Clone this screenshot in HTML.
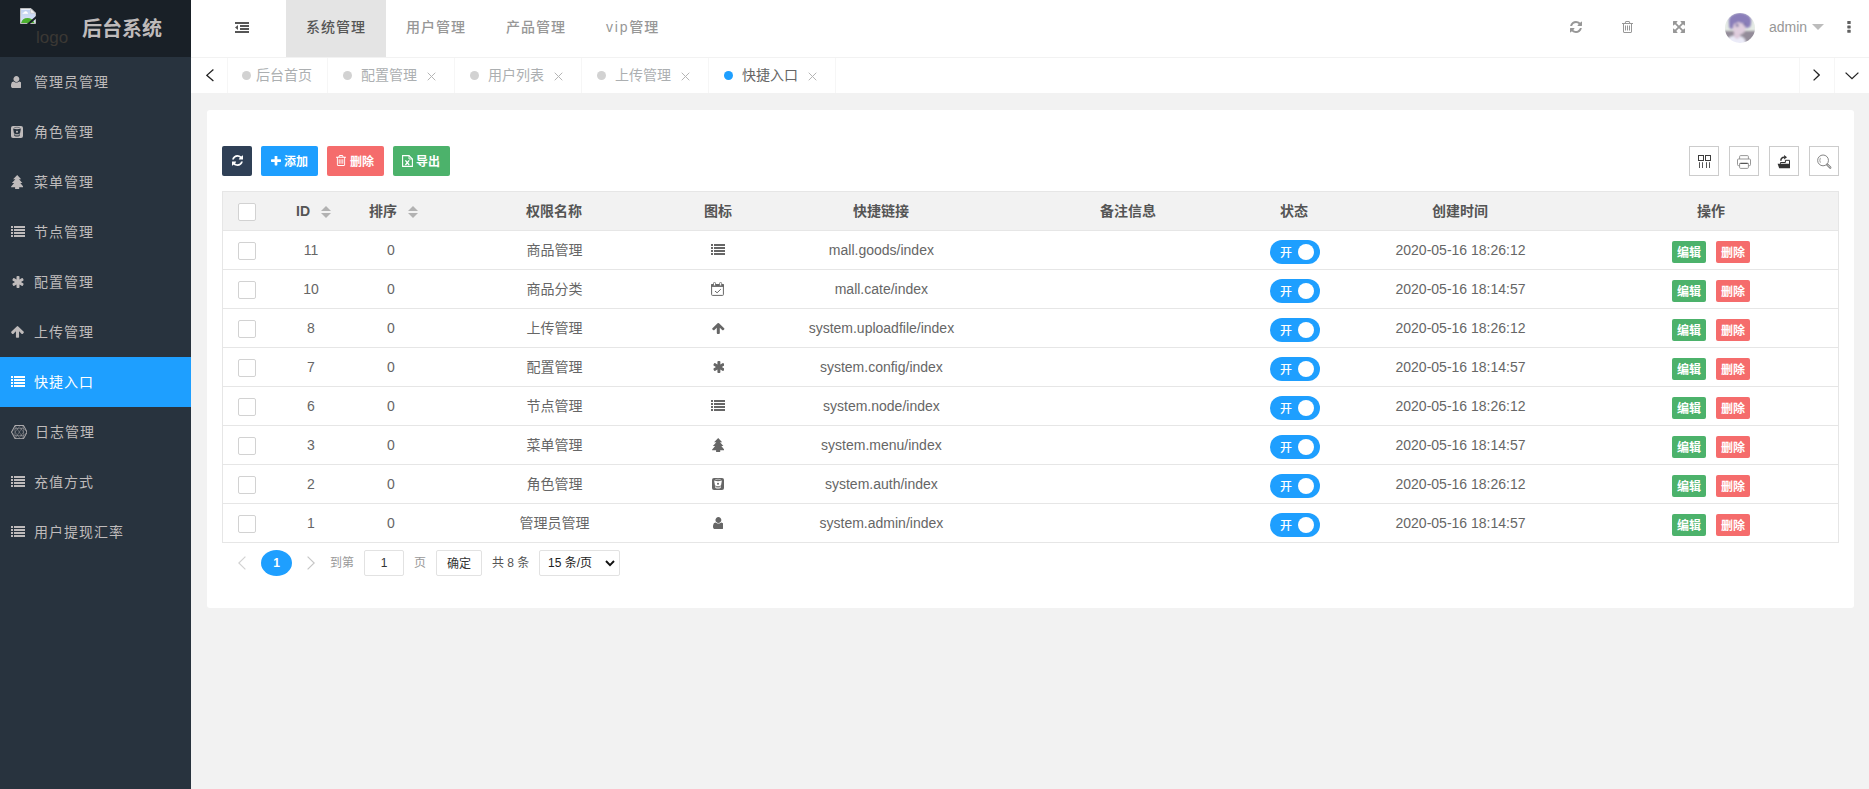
<!DOCTYPE html>
<html lang="zh-CN">
<head>
<meta charset="utf-8">
<title>后台系统</title>
<style>
*{box-sizing:border-box;margin:0;padding:0}
html,body{width:1869px;height:789px;overflow:hidden;background:#f2f2f2}
body{position:relative;font-family:"Liberation Sans","Noto Sans CJK SC",sans-serif;font-size:14px;color:#666;line-height:1}
.abs{position:absolute}
svg{display:block}
/* logo */
.logo{position:absolute;left:0;top:0;width:191px;height:57px;background:#192027}
.logo .alt{position:absolute;left:36px;top:28px;font-size:17px;color:#3b3834;line-height:20px}
.logo h1{position:absolute;left:82px;top:14px;font-size:20px;line-height:30px;font-weight:bold;color:#bfbbbb;white-space:nowrap}
/* side */
.side{position:absolute;left:0;top:57px;width:191px;height:732px;background:#28333e}
.side .it{position:absolute;left:0;width:191px;height:50px;color:#bfbbbb;font-size:14px;letter-spacing:1px;line-height:50px;padding-left:34px;white-space:nowrap}
.side .it.on{background:#1e9fff;color:#fff}
.side .it svg{position:absolute;fill:currentColor}
/* header */
.header{position:absolute;left:191px;top:0;width:1678px;height:58px;background:#fff;border-bottom:1px solid #f2f2f2;z-index:2}
.nav{position:absolute;top:0;height:57px;line-height:54px;font-size:14px;font-weight:500;letter-spacing:1px;color:#979797;white-space:nowrap}
.nav.on{background:#e4e4e4;color:#565656;width:100px;text-align:center}
/* tabs */
.tabs{position:absolute;left:191px;top:57px;width:1678px;height:36px;background:#fff}
.tabs .sep{position:absolute;top:0;width:1px;height:36px;background:#f6f6f6}
.tabs .t{position:absolute;top:0;height:36px;line-height:36px;font-size:14px;color:#acafb1;white-space:nowrap}
.tabs .t.on{color:#666}
.tabs .dot{position:absolute;top:14px;width:9px;height:9px;border-radius:50%;background:#d2d2d2}
.tabs .dot.on{background:#1e9fff}
/* card */
.card{position:absolute;left:207px;top:110px;width:1647px;height:498px;background:#fff;border-radius:3px}
.btn{position:absolute;top:146px;height:30px;border-radius:2px;color:#fff;font-size:12px;font-weight:700;line-height:32px;white-space:nowrap;overflow:hidden}
.tool{position:absolute;top:146px;width:30px;height:30px;border:1px solid #ccc;background:#fff}
/* table */
.tbl{position:absolute;left:222px;top:191px;width:1617px;height:352px;border:1px solid #e6e6e6;background:#fff}
.thead{position:absolute;left:0;top:0;width:1615px;height:39px;background:#f2f2f2;border-bottom:1px solid #e6e6e6}
.row{position:absolute;left:0;width:1615px;height:39px;border-bottom:1px solid #e6e6e6}
.c{position:absolute;top:0;height:38px;line-height:38px;text-align:center;white-space:nowrap;transform:translateX(-50%)}
.thead .c{font-weight:bold;color:#555}
.cb{position:absolute;left:15px;width:18px;height:18px;border:1px solid #d2d2d2;border-radius:2px;background:#fff}
.sw{position:absolute;left:1047px;top:9px;width:50px;height:24px;border-radius:12px;background:#1e9fff;color:#fff;font-size:12px;font-weight:500;line-height:26px;padding-left:10px;overflow:hidden}
.sw i{position:absolute;left:28px;top:4px;width:16px;height:16px;border-radius:50%;background:#fff}
.xs{position:absolute;top:10px;width:34px;height:22px;border-radius:2px;color:#fff;font-size:12px;font-weight:700;line-height:24px;overflow:hidden;text-align:center}
.ico{position:absolute}
/* page */
.pg{position:absolute;font-size:12px;line-height:26px;white-space:nowrap}
</style>
</head>
<body>
<div class="logo"><svg class="ico" style="left:20px;top:8px" width="16" height="16" viewBox="0 0 16 16"><defs><linearGradient id="sky" x1="0" y1="0" x2="0" y2="1"><stop offset="0" stop-color="#bfd0f0"/><stop offset="1" stop-color="#dbe6f9"/></linearGradient></defs><path d="M0.5 0.5 H11 L15.5 5 V15.5 H0.5Z" fill="url(#sky)" stroke="#bdbdbd" stroke-width="1"/><path d="M1.2 1.2 H10.6 V2 H1.2Z" fill="#f2f5fc"/><path d="M2.4 5.7 Q2.6 4.6 4 4.6 Q4.6 3.1 6 3.3 Q7.2 3.4 7.4 4.6 Q8.2 4.7 8.1 5.7Z" fill="#fff"/><path d="M1 15 Q2.5 9.8 7.6 9.9 Q12.4 10 14.6 15Z" fill="#4cb030"/><path d="M10.6 0.8 L15.2 5.2 H10.6Z" fill="#f4f4f4" stroke="#c4c4c4" stroke-width="0.7"/><path d="M16.2 7.7 V10.5 L9.6 16.2 H6.6Z" fill="#192027"/></svg><span class="alt">logo</span><h1>后台系统</h1></div>
<div class="side">
<div class="it" style="top:0px"><svg class="ico" style="left:10.5px;top:19px" width="10.8" height="12" viewBox="192 128 1408 1536" preserveAspectRatio="none"><path d="M1600 1405q0 120-73 189.500t-194 69.500h-874q-121 0-194-69.500t-73-189.500q0-53 3.500-103.500t14-109 26.500-108.500 43-97.500 62-81 85.500-53.500 111.500-20q9 0 42 21.500t74.500 48 108 48 133.500 21.500 133.500-21.500 108-48 74.500-48 42-21.500q61 0 111.500 20t85.500 53.500 62 81 43 97.500 26.500 108.500 14 109 3.500 103.500zm-320-893q0 159-112.500 271.500t-271.500 112.500-271.500-112.500-112.500-271.500 112.500-271.500 271.500-112.500 271.500 112.500 112.500 271.500z"/></svg>管理员管理</div>
<div class="it" style="top:50px"><svg class="ico" style="left:11px;top:19px" width="12" height="12" viewBox="0 0 12 12"><rect x="0" y="0" width="12" height="12" rx="2"/><path d="M3.2 1.7 Q6 0.8 8.8 1.7" fill="none" stroke="#28333e" stroke-width="0.5"/><path d="M2.1 2.5 Q6 4.1 9.9 2.5 L9.0 7.4 Q6 8.5 3.0 7.4 Z" fill="#28333e"/><circle cx="6" cy="5.7" r="1.0"/><path d="M3.1 8.3 Q6 9.3 8.9 8.3 L8.6 10 Q6 11 3.4 10 Z" fill="#28333e"/><path d="M3.9 9.0 Q6 9.8 8.1 9.0" fill="none" stroke="currentColor" stroke-width="0.55"/></svg>角色管理</div>
<div class="it" style="top:100px"><svg class="ico" style="left:11px;top:17.5px" width="12.4" height="14.4" viewBox="0 0 12.4 14.4"><path d="M6.2 0 L10.2 4.25 H8.05 L11.4 8.05 H9.3 L12.4 11.7 Q12.4 12.3 11.8 12.3 H8.2 V14.4 H4.1 V12.3 H0.6 Q0 12.3 0 11.7 L3.1 8.05 H0.9 L4.35 4.25 H2.1 Z"/></svg>菜单管理</div>
<div class="it" style="top:150px"><svg class="ico" style="left:11px;top:19px" width="14" height="11" viewBox="0 0 14 11"><rect x="0" y="0" width="2" height="2"/><rect x="3" y="0" width="11" height="2"/><rect x="0" y="3" width="2" height="2"/><rect x="3" y="3" width="11" height="2"/><rect x="0" y="6" width="2" height="2"/><rect x="3" y="6" width="11" height="2"/><rect x="0" y="9" width="2" height="2"/><rect x="3" y="9" width="11" height="2"/></svg>节点管理</div>
<div class="it" style="top:200px"><svg class="ico" style="left:12px;top:19px" width="12" height="12" viewBox="128 128 1536 1536" preserveAspectRatio="none"><path d="M1546 1050q46 26 59.500 77.500t-12.500 97.500l-64 110q-26 46-77.500 59.500t-97.500-12.500l-266-153v307q0 52-38 90t-90 38h-128q-52 0-90-38t-38-90v-307l-266 153q-46 26-97.500 12.500t-77.500-59.500l-64-110q-26-46-12.500-97.500t59.500-77.500l266-154-266-154q-46-26-59.500-77.500t12.500-97.500l64-110q26-46 77.500-59.500t97.500 12.500l266 153v-307q0-52 38-90t90-38h128q52 0 90 38t38 90v307l266-153q46-26 97.500-12.500t77.500 59.500l64 110q26 46 12.500 97.500t-59.500 77.500l-266 154z"/></svg>配置管理</div>
<div class="it" style="top:250px"><svg class="ico" style="left:11px;top:19px" width="13" height="12" viewBox="96 180 1600 1500" preserveAspectRatio="none"><path d="M1675 971q0 51-37 90l-75 75q-38 38-91 38-54 0-90-38l-294-293v704q0 52-37.500 84.500t-90.500 32.500h-128q-53 0-90.500-32.500t-37.500-84.500v-704l-294 293q-36 38-90 38t-90-38l-75-75q-38-38-38-90 0-53 38-91l651-651q35-37 90-37 54 0 91 37l651 651q37 39 37 91z"/></svg>上传管理</div>
<div class="it on" style="top:300px"><svg class="ico" style="left:11px;top:19px" width="14" height="11" viewBox="0 0 14 11"><rect x="0" y="0" width="2" height="2"/><rect x="3" y="0" width="11" height="2"/><rect x="0" y="3" width="2" height="2"/><rect x="3" y="3" width="11" height="2"/><rect x="0" y="6" width="2" height="2"/><rect x="3" y="6" width="11" height="2"/><rect x="0" y="9" width="2" height="2"/><rect x="3" y="9" width="11" height="2"/></svg>快捷入口</div>
<div class="it" style="top:350px;padding-left:35px"><svg class="ico" style="left:10.8px;top:17.9px;fill:none" width="16.6" height="14.2" viewBox="0 0 16.6 14.2" stroke="#bfbbbb" stroke-width="0.9" fill="none"><path d="M4 0.5 H12.6 L16.1 7.1 L12.6 13.7 H4 L0.5 7.1 Z"/><g stroke-width="0.55" opacity="0.7"><path d="M4 0.5 V13.7 M12.6 0.5 V13.7 M4 0.5 L12.6 13.7 M12.6 0.5 L4 13.7 M4 7.1 L8.3 1.6 L12.6 7.1 L8.3 12.6 Z M0.5 7.1 L4 3.4 M0.5 7.1 L4 10.8 M16.1 7.1 L12.6 3.4 M16.1 7.1 L12.6 10.8 M4 3.6 H12.6 M4 10.6 H12.6"/></g></svg>日志管理</div>
<div class="it" style="top:400px"><svg class="ico" style="left:11px;top:19px" width="14" height="11" viewBox="0 0 14 11"><rect x="0" y="0" width="2" height="2"/><rect x="3" y="0" width="11" height="2"/><rect x="0" y="3" width="2" height="2"/><rect x="3" y="3" width="11" height="2"/><rect x="0" y="6" width="2" height="2"/><rect x="3" y="6" width="11" height="2"/><rect x="0" y="9" width="2" height="2"/><rect x="3" y="9" width="11" height="2"/></svg>充值方式</div>
<div class="it" style="top:450px"><svg class="ico" style="left:11px;top:19px" width="14" height="11" viewBox="0 0 14 11"><rect x="0" y="0" width="2" height="2"/><rect x="3" y="0" width="11" height="2"/><rect x="0" y="3" width="2" height="2"/><rect x="3" y="3" width="11" height="2"/><rect x="0" y="6" width="2" height="2"/><rect x="3" y="6" width="11" height="2"/><rect x="0" y="9" width="2" height="2"/><rect x="3" y="9" width="11" height="2"/></svg>用户提现汇率</div>
</div>
<div class="header">
<svg class="ico" style="left:44px;top:22px" width="14" height="11" viewBox="0 0 14 11" fill="#565656"><rect x="0" y="0" width="14" height="2"/><rect x="5" y="3" width="9" height="2"/><rect x="5" y="6" width="9" height="2"/><rect x="0" y="9" width="14" height="2"/><path d="M3 3 V8 L0 5.5Z"/></svg>
<div class="nav on" style="left:95px">系统管理</div>
<div class="nav" style="left:215px">用户管理</div>
<div class="nav" style="left:315px">产品管理</div>
<div class="nav" style="left:415px"><span style="letter-spacing:1.8px">vip</span>管理</div>
<svg class="ico" style="left:1379px;top:21px" width="12" height="12" viewBox="128 128 1536 1536" preserveAspectRatio="none" fill="#979797"><path d="M1639 1056q0 5-1 7-64 268-268 434.500t-478 166.500q-146 0-282.500-55t-243.500-157l-129 129q-19 19-45 19t-45-19-19-45v-448q0-26 19-45t45-19h448q26 0 45 19t19 45-19 45l-137 137q71 66 161 102t187 36q134 0 250-65t186-179q11-17 53-117 8-23 30-23h192q13 0 22.500 9.500t9.500 22.500zm25-800v448q0 26-19 45t-45 19h-448q-26 0-45-19t-19-45 19-45l138-138q-148-137-349-137-134 0-250 65t-186 179q-11 17-53 117-8 23-30 23h-199q-13 0-22.500-9.500t-9.500-22.500v-7q65-268 270-434.500t480-166.500q146 0 284 55.500t245 156.500l130-129q19-19 45-19t45 19 19 45z"/></svg>
<svg class="ico" style="left:1431px;top:21px" width="11" height="12" viewBox="192 128 1408 1536" preserveAspectRatio="none" fill="#979797"><path d="M704 736v576q0 14-9 23t-23 9h-64q-14 0-23-9t-9-23v-576q0-14 9-23t23-9h64q14 0 23 9t9 23zm256 0v576q0 14-9 23t-23 9h-64q-14 0-23-9t-9-23v-576q0-14 9-23t23-9h64q14 0 23 9t9 23zm256 0v576q0 14-9 23t-23 9h-64q-14 0-23-9t-9-23v-576q0-14 9-23t23-9h64q14 0 23 9t9 23zm128 724v-948h-896v948q0 22 7 40.500t14.500 27 10.500 8.500h832q3 0 10.500-8.500t14.500-27 7-40.500zm-672-1076h448l-48-117q-7-9-17-11h-317q-10 2-17 11zm928 32v64q0 14-9 23t-23 9h-96v948q0 83-47 143.500t-113 60.500h-832q-66 0-113-58.500t-47-141.500v-952h-96q-14 0-23-9t-9-23v-64q0-14 9-23t23-9h309l70-167q15-37 54-63t79-26h320q40 0 79 26t54 63l70 167h309q14 0 23 9t9 23z"/></svg>
<svg class="ico" style="left:1482px;top:21px" width="12" height="12" viewBox="128 128 1536 1536" preserveAspectRatio="none" fill="#979797"><path d="M1411 541l-355 355 355 355 144-144q29-31 70-14 39 17 39 59v448q0 26-19 45t-45 19h-448q-42 0-59-40-17-39 14-69l144-144-355-355-355 355 144 144q31 30 14 69-17 40-59 40h-448q-26 0-45-19t-19-45v-448q0-42 40-59 39-17 69 14l144 144 355-355-355-355-144 144q-19 19-45 19-12 0-24-5-40-17-40-59v-448q0-26 19-45t45-19h448q42 0 59 40 17 39-14 69l-144 144 355 355 355-355-144-144q-31-30-14-69 17-40 59-40h448q26 0 45 19t19 45v448q0 42-39 59-13 5-25 5-26 0-45-19z"/></svg>
<svg class="ico" style="left:1534px;top:13px" width="30" height="30" viewBox="0 0 30 30"><defs><clipPath id="av"><circle cx="15" cy="15" r="15"/></clipPath><filter id="bl" x="-20%" y="-20%" width="140%" height="140%"><feGaussianBlur stdDeviation="0.9"/></filter></defs><g clip-path="url(#av)" opacity="0.88"><rect width="30" height="30" fill="#e2e9e2"/><g filter="url(#bl)"><rect x="-3" y="18" width="36" height="15" fill="#857d8b"/><ellipse cx="11" cy="28.5" rx="9.5" ry="6" fill="#e9e9f7"/><ellipse cx="15" cy="8" rx="11.2" ry="8.6" fill="#7a6db0"/><ellipse cx="6.6" cy="11.5" rx="2.6" ry="4.6" fill="#7a6db0"/><ellipse cx="22.5" cy="10.5" rx="3.4" ry="4.2" fill="#7a6db0"/><ellipse cx="12" cy="21" rx="3.2" ry="5" fill="#d9c3d6"/><ellipse cx="14.2" cy="15" rx="6.2" ry="6.6" fill="#dcc8da"/><path d="M6 9.5 Q10 12 13.5 9 Q17 11.5 20 9.5 Q23 10.5 24 8 L22 2 H8Z" fill="#7a6db0"/><ellipse cx="12.2" cy="12.4" rx="1.5" ry="1.3" fill="#5a5390"/><ellipse cx="19.6" cy="11.4" rx="1.3" ry="1.2" fill="#5a5390"/></g></g></svg>
<div class="nav" style="left:1578px;letter-spacing:0">admin</div>
<div style="position:absolute;left:1621px;top:24px;width:0;height:0;border:6px solid transparent;border-top-color:#bcbcbc"></div>
<svg class="ico" style="left:1655.5px;top:21px" width="4" height="12" viewBox="0 0 4 12" fill="#606060"><rect x="0.3" y="0" width="3.4" height="3" rx="0.6"/><rect x="0.3" y="4.4" width="3.4" height="3" rx="0.6"/><rect x="0.3" y="8.8" width="3.4" height="3" rx="0.6"/></svg>
</div>
<div class="tabs">
<div class="sep" style="left:36px"></div>
<div class="sep" style="left:136px"></div>
<div class="sep" style="left:263px"></div>
<div class="sep" style="left:390px"></div>
<div class="sep" style="left:517px"></div>
<div class="sep" style="left:644px"></div>
<div class="sep" style="left:1608px"></div>
<div class="sep" style="left:1643px"></div>
<svg class="ico" style="left:15px;top:12px;fill:none" width="8" height="12.6" viewBox="0 0 8 12.6" fill="none" stroke="#222" stroke-width="1.3"><path d="M7.4 0.6 L0.8 6.3 L7.4 12.0"/></svg>
<svg class="ico" style="left:1622px;top:12px;fill:none" width="7" height="12" viewBox="0 0 7 12" fill="none" stroke="#222" stroke-width="1.3"><path d="M0.6 0.6 L6.2 6.0 L0.6 11.4"/></svg>
<svg class="ico" style="left:1654px;top:15px;fill:none" width="14" height="7.5" viewBox="0 0 14 7.5" fill="none" stroke="#222" stroke-width="1.3"><path d="M0.6 0.6 L7.0 6.7 L13.4 0.6"/></svg>
<div class="dot" style="left:51px"></div><div class="t" style="left:65px">后台首页</div>
<div class="dot" style="left:152px"></div><div class="t" style="left:170px">配置管理</div>
<svg class="ico" style="left:236.4px;top:15px;fill:none" width="9" height="9" viewBox="0 0 9 9" fill="none" stroke="#b5b5b5" stroke-width="1"><path d="M0.7 0.7 L8.3 8.3 M8.3 0.7 L0.7 8.3"/></svg>
<div class="dot" style="left:279px"></div><div class="t" style="left:297px">用户列表</div>
<svg class="ico" style="left:363.4px;top:15px;fill:none" width="9" height="9" viewBox="0 0 9 9" fill="none" stroke="#b5b5b5" stroke-width="1"><path d="M0.7 0.7 L8.3 8.3 M8.3 0.7 L0.7 8.3"/></svg>
<div class="dot" style="left:406px"></div><div class="t" style="left:424px">上传管理</div>
<svg class="ico" style="left:490.4px;top:15px;fill:none" width="9" height="9" viewBox="0 0 9 9" fill="none" stroke="#b5b5b5" stroke-width="1"><path d="M0.7 0.7 L8.3 8.3 M8.3 0.7 L0.7 8.3"/></svg>
<div class="dot on" style="left:533px"></div><div class="t on" style="left:551px">快捷入口</div>
<svg class="ico" style="left:617.4px;top:15px;fill:none" width="9" height="9" viewBox="0 0 9 9" fill="none" stroke="#b5b5b5" stroke-width="1"><path d="M0.7 0.7 L8.3 8.3 M8.3 0.7 L0.7 8.3"/></svg>
</div>
<div class="card"></div>
<div class="btn" style="left:222px;width:30px;background:#2f4056"><svg class="ico" style="left:10px;top:9px" width="11" height="11" viewBox="128 128 1536 1536" preserveAspectRatio="none" fill="#fff"><path d="M1639 1056q0 5-1 7-64 268-268 434.500t-478 166.500q-146 0-282.500-55t-243.500-157l-129 129q-19 19-45 19t-45-19-19-45v-448q0-26 19-45t45-19h448q26 0 45 19t19 45-19 45l-137 137q71 66 161 102t187 36q134 0 250-65t186-179q11-17 53-117 8-23 30-23h192q13 0 22.500 9.500t9.500 22.500zm25-800v448q0 26-19 45t-45 19h-448q-26 0-45-19t-19-45 19-45l138-138q-148-137-349-137-134 0-250 65t-186 179q-11 17-53 117-8 23-30 23h-199q-13 0-22.500-9.500t-9.500-22.500v-7q65-268 270-434.500t480-166.500q146 0 284 55.500t245 156.500l130-129q19-19 45-19t45 19 19 45z"/></svg></div>
<div class="btn" style="left:261px;width:57px;background:#1e9fff;padding-left:23px"><svg class="ico" style="left:10px;top:10px" width="10" height="10" viewBox="192 192 1408 1408" preserveAspectRatio="none" fill="#fff"><path d="M1600 736v192q0 40-28 68t-68 28h-416v416q0 40-28 68t-68 28h-192q-40 0-68-28t-28-68v-416h-416q-40 0-68-28t-28-68v-192q0-40 28-68t68-28h416v-416q0-40 28-68t68-28h192q40 0 68 28t28 68v416h416q40 0 68 28t28 68z"/></svg>添加</div>
<div class="btn" style="left:327px;width:57px;background:#f56c6c;padding-left:23px"><svg class="ico" style="left:9px;top:9px" width="10" height="11" viewBox="192 128 1408 1536" preserveAspectRatio="none" fill="#fff"><path d="M704 736v576q0 14-9 23t-23 9h-64q-14 0-23-9t-9-23v-576q0-14 9-23t23-9h64q14 0 23 9t9 23zm256 0v576q0 14-9 23t-23 9h-64q-14 0-23-9t-9-23v-576q0-14 9-23t23-9h64q14 0 23 9t9 23zm256 0v576q0 14-9 23t-23 9h-64q-14 0-23-9t-9-23v-576q0-14 9-23t23-9h64q14 0 23 9t9 23zm128 724v-948h-896v948q0 22 7 40.500t14.500 27 10.500 8.500h832q3 0 10.500-8.500t14.500-27 7-40.500zm-672-1076h448l-48-117q-7-9-17-11h-317q-10 2-17 11zm928 32v64q0 14-9 23t-23 9h-96v948q0 83-47 143.500t-113 60.500h-832q-66 0-113-58.500t-47-141.500v-952h-96q-14 0-23-9t-9-23v-64q0-14 9-23t23-9h309l70-167q15-37 54-63t79-26h320q40 0 79 26t54 63l70 167h309q14 0 23 9t9 23z"/></svg>删除</div>
<div class="btn" style="left:393px;width:57px;background:#4cb26b;padding-left:23px"><svg class="ico" style="left:9px;top:9px;fill:none" width="11" height="12" viewBox="0 0 11 12" fill="none" stroke="#fff"><path d="M0.6 0.6 H7 L10.4 4 V11.4 H0.6 Z" stroke-width="1.1"/><path d="M7 0.6 V4 H10.4" stroke-width="0.9"/><path d="M3.4 5.4 L7.2 10 M7.2 5.4 L3.4 10" stroke-width="1.3"/></svg>导出</div>
<div class="tool" style="left:1689px"><svg class="ico" style="left:0;top:0;fill:none" width="28" height="28" viewBox="0 0 28 28" fill="none" stroke="#3c3c3c" stroke-width="1"><rect x="8.5" y="8.5" width="5" height="5"/><rect x="15.5" y="8.5" width="5" height="5"/><path d="M9.5 15.2 V21 M12.5 15.2 V21 M16.5 15.2 V21 M19.5 15.2 V21" stroke="#555"/></svg></div>
<div class="tool" style="left:1729px"><svg class="ico" style="left:7px;top:8px;fill:none" width="14" height="14" viewBox="0 0 14 14" fill="none" stroke="#8c8c8c" stroke-width="0.9"><path d="M2.6 4 V1.6 Q2.6 0.6 3.6 0.6 H10.4 Q11.4 0.6 11.4 1.6 V4"/><path d="M2.6 10.6 H1.4 Q0.5 10.6 0.5 9.6 V5 Q0.5 4 1.4 4 H12.6 Q13.5 4 13.5 5 V9.6 Q13.5 10.6 12.6 10.6 H11.4"/><path d="M2.6 8.4 H11.4 V12.4 Q11.4 13.4 10.4 13.4 H3.6 Q2.6 13.4 2.6 12.4Z"/><path d="M3.4 8.4 H10.6" stroke="#555" stroke-width="1.2"/></svg></div>
<div class="tool" style="left:1769px"><svg class="ico" style="left:7px;top:8px" width="14" height="14" viewBox="0 0 14 14" fill="#333"><path d="M0.6 8.8 H12.3 L13 13.2 H2.2Z"/><path d="M3.5 8.8 V7.5 H8.4 V5.3 H12.5 V13" fill="none" stroke="#333" stroke-width="1"/><path d="M3.9 5.8 Q3.7 2.3 7.4 2.3" fill="none" stroke="#333" stroke-width="1.5"/><path d="M7.1 0 L10 2.3 L7.1 4.6Z"/></svg></div>
<div class="tool" style="left:1809px"><svg class="ico" style="left:6px;top:7px;fill:none" width="17" height="17" viewBox="0 0 17 17" fill="none" stroke="#777" stroke-width="0.9"><circle cx="7.05" cy="6.4" r="5.4"/><path d="M4.4 3.9 Q3.1 6.3 4.4 8.7" stroke-width="0.7"/><path d="M11.3 10.6 L14.3 13.6" stroke-width="2.2" stroke-linecap="round"/><path d="M11.5 10.8 L14.1 13.4" stroke="#fff" stroke-width="0.8" stroke-linecap="round"/></svg></div>
<div class="tbl">
<div class="thead"><div class="cb" style="top:11px"></div>
<div class="c" style="left:80px">ID</div>
<div class="c" style="left:160px">排序</div>
<div class="c" style="left:331px">权限名称</div>
<div class="c" style="left:495px">图标</div>
<div class="c" style="left:658px">快捷链接</div>
<div class="c" style="left:905px">备注信息</div>
<div class="c" style="left:1071px">状态</div>
<div class="c" style="left:1237px">创建时间</div>
<div class="c" style="left:1488px">操作</div>
<div style="position:absolute;left:98px;top:14px;width:0;height:0;border:5px solid transparent;border-top:0;border-bottom:5px solid #b2b2b2"></div>
<div style="position:absolute;left:98px;top:21px;width:0;height:0;border:5px solid transparent;border-bottom:0;border-top:5px solid #b2b2b2"></div>
<div style="position:absolute;left:185px;top:14px;width:0;height:0;border:5px solid transparent;border-top:0;border-bottom:5px solid #b2b2b2"></div>
<div style="position:absolute;left:185px;top:21px;width:0;height:0;border:5px solid transparent;border-bottom:0;border-top:5px solid #b2b2b2"></div>
</div>
<div class="row" style="top:39px"><div class="cb" style="top:11px"></div>
<div class="c" style="left:88px">11</div><div class="c" style="left:168px">0</div><div class="c" style="left:331.4px">商品管理</div>
<svg class="ico" style="left:488px;top:13px" width="14" height="11" viewBox="0 0 14 11" fill="#666"><rect x="0" y="0" width="2" height="2"/><rect x="3" y="0" width="11" height="2"/><rect x="0" y="3" width="2" height="2"/><rect x="3" y="3" width="11" height="2"/><rect x="0" y="6" width="2" height="2"/><rect x="3" y="6" width="11" height="2"/><rect x="0" y="9" width="2" height="2"/><rect x="3" y="9" width="11" height="2"/></svg>
<div class="c" style="left:658.4px">mall.goods/index</div>
<div class="sw">开<i></i></div>
<div class="c" style="left:1237.5px">2020-05-16 18:26:12</div>
<div class="xs" style="left:1449px;background:#4cb26b">编辑</div><div class="xs" style="left:1493px;background:#f56c6c">删除</div>
</div>
<div class="row" style="top:78px"><div class="cb" style="top:11px"></div>
<div class="c" style="left:88px">10</div><div class="c" style="left:168px">0</div><div class="c" style="left:331.4px">商品分类</div>
<svg class="ico" style="left:488px;top:12px;fill:none" width="13" height="14" viewBox="0 0 13 14" fill="none" stroke="#666"><rect x="0.6" y="2.6" width="11.8" height="10.8" rx="0.8" stroke-width="1"/><rect x="0.1" y="2.1" width="12.8" height="2.8" fill="#666" stroke="none"/><rect x="2.5" y="0.4" width="2" height="3.5" rx="0.9" fill="#fff" stroke-width="0.8"/><rect x="8.6" y="0.4" width="2" height="3.5" rx="0.9" fill="#fff" stroke-width="0.8"/><path d="M4 9.1 L6.1 10.8 L9.8 7.2" stroke-width="1"/></svg>
<div class="c" style="left:658.4px">mall.cate/index</div>
<div class="sw">开<i></i></div>
<div class="c" style="left:1237.5px">2020-05-16 18:14:57</div>
<div class="xs" style="left:1449px;background:#4cb26b">编辑</div><div class="xs" style="left:1493px;background:#f56c6c">删除</div>
</div>
<div class="row" style="top:117px"><div class="cb" style="top:11px"></div>
<div class="c" style="left:88px">8</div><div class="c" style="left:168px">0</div><div class="c" style="left:331.4px">上传管理</div>
<svg class="ico" style="left:489px;top:14px" width="12.6" height="11" viewBox="96 180 1600 1500" preserveAspectRatio="none" fill="#666"><path d="M1675 971q0 51-37 90l-75 75q-38 38-91 38-54 0-90-38l-294-293v704q0 52-37.500 84.500t-90.500 32.500h-128q-53 0-90.500-32.500t-37.500-84.500v-704l-294 293q-36 38-90 38t-90-38l-75-75q-38-38-38-90 0-53 38-91l651-651q35-37 90-37 54 0 91 37l651 651q37 39 37 91z"/></svg>
<div class="c" style="left:658.4px">system.uploadfile/index</div>
<div class="sw">开<i></i></div>
<div class="c" style="left:1237.5px">2020-05-16 18:26:12</div>
<div class="xs" style="left:1449px;background:#4cb26b">编辑</div><div class="xs" style="left:1493px;background:#f56c6c">删除</div>
</div>
<div class="row" style="top:156px"><div class="cb" style="top:11px"></div>
<div class="c" style="left:88px">7</div><div class="c" style="left:168px">0</div><div class="c" style="left:331.4px">配置管理</div>
<svg class="ico" style="left:489.5px;top:13px" width="11.8" height="12" viewBox="128 128 1536 1536" preserveAspectRatio="none" fill="#666"><path d="M1546 1050q46 26 59.500 77.500t-12.500 97.500l-64 110q-26 46-77.500 59.500t-97.500-12.500l-266-153v307q0 52-38 90t-90 38h-128q-52 0-90-38t-38-90v-307l-266 153q-46 26-97.500 12.500t-77.500-59.500l-64-110q-26-46-12.500-97.500t59.500-77.500l266-154-266-154q-46-26-59.500-77.500t12.500-97.500l64-110q26-46 77.500-59.500t97.500 12.500l266 153v-307q0-52 38-90t90-38h128q52 0 90 38t38 90v307l266-153q46-26 97.500-12.500t77.500 59.500l64 110q26 46 12.500 97.500t-59.500 77.500l-266 154z"/></svg>
<div class="c" style="left:658.4px">system.config/index</div>
<div class="sw">开<i></i></div>
<div class="c" style="left:1237.5px">2020-05-16 18:14:57</div>
<div class="xs" style="left:1449px;background:#4cb26b">编辑</div><div class="xs" style="left:1493px;background:#f56c6c">删除</div>
</div>
<div class="row" style="top:195px"><div class="cb" style="top:11px"></div>
<div class="c" style="left:88px">6</div><div class="c" style="left:168px">0</div><div class="c" style="left:331.4px">节点管理</div>
<svg class="ico" style="left:488px;top:13px" width="14" height="11" viewBox="0 0 14 11" fill="#666"><rect x="0" y="0" width="2" height="2"/><rect x="3" y="0" width="11" height="2"/><rect x="0" y="3" width="2" height="2"/><rect x="3" y="3" width="11" height="2"/><rect x="0" y="6" width="2" height="2"/><rect x="3" y="6" width="11" height="2"/><rect x="0" y="9" width="2" height="2"/><rect x="3" y="9" width="11" height="2"/></svg>
<div class="c" style="left:658.4px">system.node/index</div>
<div class="sw">开<i></i></div>
<div class="c" style="left:1237.5px">2020-05-16 18:26:12</div>
<div class="xs" style="left:1449px;background:#4cb26b">编辑</div><div class="xs" style="left:1493px;background:#f56c6c">删除</div>
</div>
<div class="row" style="top:234px"><div class="cb" style="top:11px"></div>
<div class="c" style="left:88px">3</div><div class="c" style="left:168px">0</div><div class="c" style="left:331.4px">菜单管理</div>
<svg class="ico" style="left:488.8px;top:12px" width="12.4" height="14.4" viewBox="0 0 12.4 14.4" fill="#666"><path d="M6.2 0 L10.2 4.25 H8.05 L11.4 8.05 H9.3 L12.4 11.7 Q12.4 12.3 11.8 12.3 H8.2 V14.4 H4.1 V12.3 H0.6 Q0 12.3 0 11.7 L3.1 8.05 H0.9 L4.35 4.25 H2.1 Z"/></svg>
<div class="c" style="left:658.4px">system.menu/index</div>
<div class="sw">开<i></i></div>
<div class="c" style="left:1237.5px">2020-05-16 18:14:57</div>
<div class="xs" style="left:1449px;background:#4cb26b">编辑</div><div class="xs" style="left:1493px;background:#f56c6c">删除</div>
</div>
<div class="row" style="top:273px"><div class="cb" style="top:11px"></div>
<div class="c" style="left:88px">2</div><div class="c" style="left:168px">0</div><div class="c" style="left:331.4px">角色管理</div>
<svg class="ico" style="left:489px;top:13px" width="12" height="12" viewBox="0 0 12 12" fill="#666"><rect x="0" y="0" width="12" height="12" rx="2"/><path d="M3.2 1.7 Q6 0.8 8.8 1.7" fill="none" stroke="#fff" stroke-width="0.5"/><path d="M2.1 2.5 Q6 4.1 9.9 2.5 L9.0 7.4 Q6 8.5 3.0 7.4 Z" fill="#fff"/><circle cx="6" cy="5.7" r="1.0"/><path d="M3.1 8.3 Q6 9.3 8.9 8.3 L8.6 10 Q6 11 3.4 10 Z" fill="#fff"/><path d="M3.9 9.0 Q6 9.8 8.1 9.0" fill="none" stroke="currentColor" stroke-width="0.55"/></svg>
<div class="c" style="left:658.4px">system.auth/index</div>
<div class="sw">开<i></i></div>
<div class="c" style="left:1237.5px">2020-05-16 18:26:12</div>
<div class="xs" style="left:1449px;background:#4cb26b">编辑</div><div class="xs" style="left:1493px;background:#f56c6c">删除</div>
</div>
<div class="row" style="top:312px;border-bottom:0"><div class="cb" style="top:11px"></div>
<div class="c" style="left:88px">1</div><div class="c" style="left:168px">0</div><div class="c" style="left:331.4px">管理员管理</div>
<svg class="ico" style="left:489.6px;top:13px" width="10.8" height="12" viewBox="192 128 1408 1536" preserveAspectRatio="none" fill="#666"><path d="M1600 1405q0 120-73 189.500t-194 69.500h-874q-121 0-194-69.500t-73-189.500q0-53 3.500-103.500t14-109 26.500-108.500 43-97.500 62-81 85.500-53.500 111.500-20q9 0 42 21.500t74.500 48 108 48 133.500 21.500 133.500-21.500 108-48 74.500-48 42-21.500q61 0 111.500 20t85.500 53.500 62 81 43 97.500 26.500 108.500 14 109 3.500 103.500zm-320-893q0 159-112.500 271.500t-271.500 112.500-271.500-112.500-112.500-271.500 112.500-271.500 271.500-112.500 271.500 112.500 112.500 271.500z"/></svg>
<div class="c" style="left:658.4px">system.admin/index</div>
<div class="sw">开<i></i></div>
<div class="c" style="left:1237.5px">2020-05-16 18:14:57</div>
<div class="xs" style="left:1449px;background:#4cb26b">编辑</div><div class="xs" style="left:1493px;background:#f56c6c">删除</div>
</div>
</div>
<svg class="ico" style="left:238px;top:556px;fill:none" width="8" height="14" viewBox="0 0 8 14" fill="none" stroke="#d2d2d2" stroke-width="1.2"><path d="M7.4 0.6 L0.8 7.0 L7.4 13.4"/></svg>
<div class="pg" style="left:261px;top:550px;width:31px;height:26px;border-radius:50%;background:#1e9fff;color:#fff;text-align:center;font-weight:bold">1</div>
<svg class="ico" style="left:307px;top:556px;fill:none" width="8" height="14" viewBox="0 0 8 14" fill="none" stroke="#c6c6c6" stroke-width="1.2"><path d="M0.6 0.6 L7.2 7.0 L0.6 13.4"/></svg>
<div class="pg" style="left:330px;top:550px;color:#999">到第</div>
<div class="pg" style="left:364px;top:550px;width:40px;height:26px;border:1px solid #e2e2e2;border-radius:2px;background:#fff;color:#333;text-align:center;line-height:24px">1</div>
<div class="pg" style="left:414px;top:550px;color:#999">页</div>
<div class="pg" style="left:436px;top:550px;width:46px;height:26px;border:1px solid #e2e2e2;border-radius:2px;background:#fff;color:#333;text-align:center;line-height:26px">确定</div>
<div class="pg" style="left:492px;top:550px;color:#555">共 8 条</div>
<div class="pg" style="left:539px;top:550px;width:81px;height:26px;border:1px solid #e2e2e2;border-radius:2px;background:#fff;color:#222;padding-left:8px;line-height:24px">15 条/页<svg class="ico" style="left:64.5px;top:9px;fill:none" width="10" height="7" viewBox="0 0 10 7" fill="none" stroke="#111" stroke-width="1.9"><path d="M1 1 L5 5.2 L9 1"/></svg></div>
</body>
</html>
